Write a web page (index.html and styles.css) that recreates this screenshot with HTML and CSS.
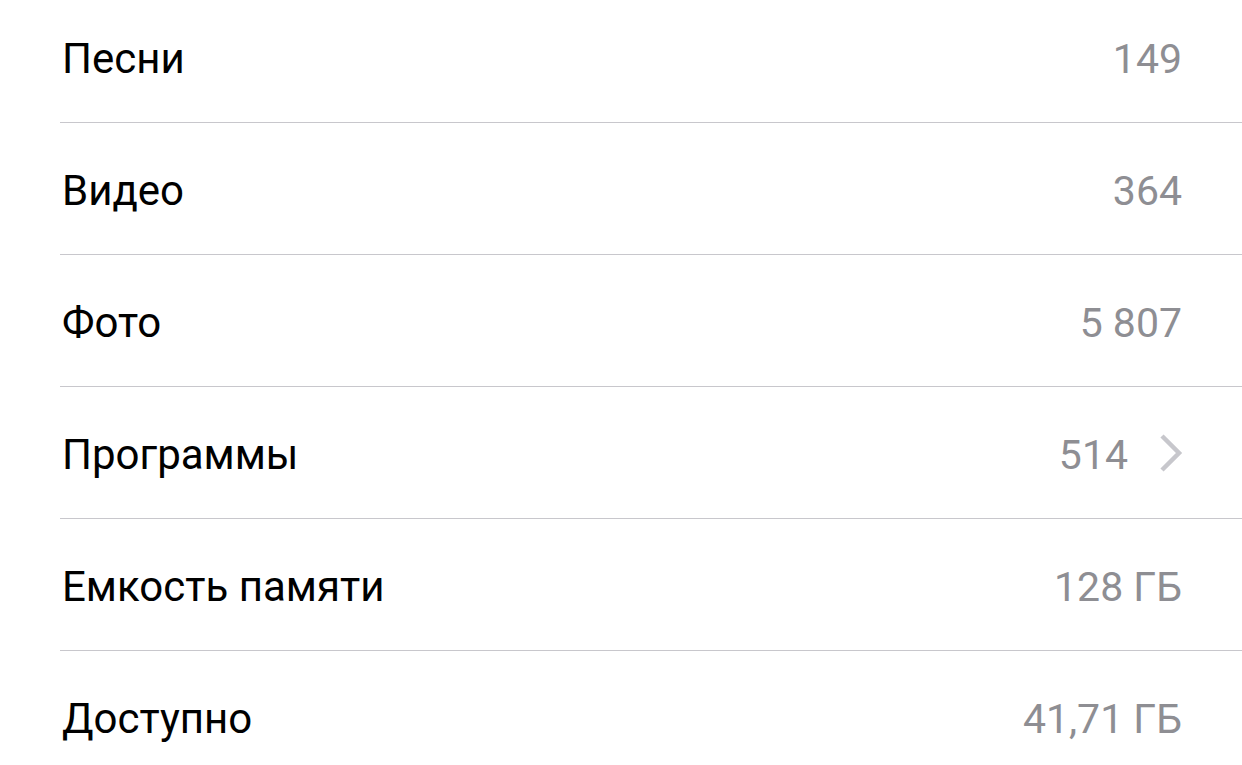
FILE: index.html
```html
<!DOCTYPE html>
<html lang="ru">

<head>
  <meta charset="UTF-8">
  <meta name="viewport" content="width=device-width, initial-scale=1.0">
  <title>Об этом устройстве</title>
  <link rel="stylesheet" href="styles.css">
</head>

<body>

  <ul class="list">
    <li class="row"><span class="label">Песни</span><span class="value">149</span></li>
    <li class="row"><span class="label">Видео</span><span class="value">364</span></li>
    <li class="row"><span class="label">Фото</span><span class="value">5 807</span></li>
    <li class="row">
      <span class="label">Программы</span>
      <span class="value">514</span>
      <svg class="chevron" width="26" height="40" viewBox="0 0 26 40">
        <path d="M4 3 L21 20 L4 37" fill="none" stroke="#c7c7cc" stroke-width="4.5"/>
      </svg>
    </li>
    <li class="row"><span class="label">Емкость памяти</span><span class="value">128 ГБ</span></li>
    <li class="row"><span class="label">Доступно</span><span class="value">41,71 ГБ</span></li>
  </ul>

</body>

</html>
```

FILE: styles.css
```css
body {
  font-family: Roboto, "Liberation Sans", sans-serif;
  margin: 0;
  background: #fff;
  overflow: hidden;
}

.list {
  list-style: none;
  margin: -9px 0 0 0;
  padding: 0 0 0 60px;
}

.row {
  display: flex;
  align-items: center;
  box-sizing: border-box;
  height: 132px;
  border-bottom: 1px solid #c8c7cc;
  padding: 4px 60px 0 2px;
  font-size: 42px;
}

.label {
  flex: 1;
  color: #000;
}

.value {
  color: #8e8e93;
  font-size: 41px;
}

.chevron {
  margin-left: 30px;
  margin-right: -2px;
  margin-top: -4px;
}
```
